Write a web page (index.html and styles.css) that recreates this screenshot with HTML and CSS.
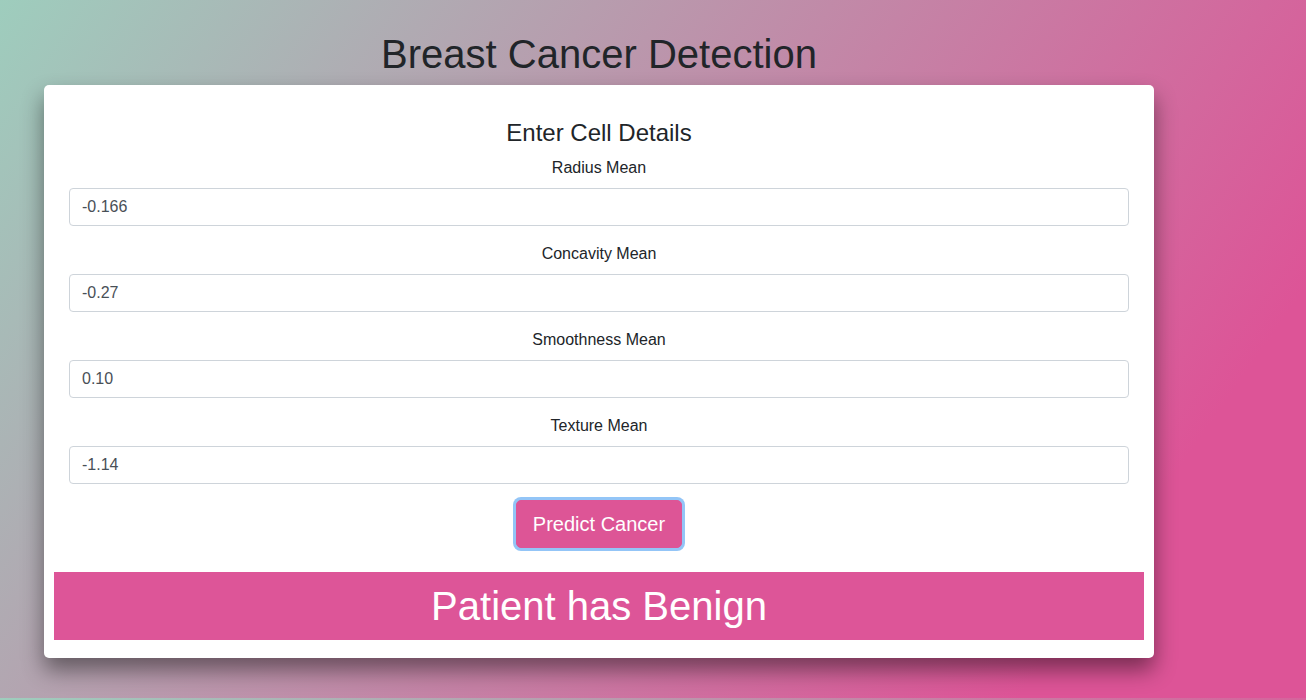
FILE: index.html
```html
<!DOCTYPE html>
<html lang="en">
<head>
<meta charset="utf-8">
<title>Breast Cancer Detection</title>
<link rel="stylesheet" href="styles.css">
</head>
<body>
<div class="wrap">
  <h1 class="title">Breast Cancer Detection</h1>
  <div class="card">
    <form class="form">
      <h4 class="form-title">Enter Cell Details</h4>
      <div class="group">
        <label class="label">Radius Mean</label>
        <input class="input" type="text" value="-0.166">
      </div>
      <div class="group">
        <label class="label">Concavity Mean</label>
        <input class="input" type="text" value="-0.27">
      </div>
      <div class="group">
        <label class="label">Smoothness Mean</label>
        <input class="input" type="text" value="0.10">
      </div>
      <div class="group">
        <label class="label">Texture Mean</label>
        <input class="input" type="text" value="-1.14">
      </div>
      <div class="actions">
        <button class="btn" type="button">Predict Cancer</button>
      </div>
    </form>
    <div class="result">Patient has Benign</div>
  </div>
</div>
</body>
</html>
```

FILE: styles.css
```css
html {
  background: linear-gradient(125deg, #9ecdbd 0%, #dd5497 84%) 0 0 / 100% 698px repeat;
}
body {
  margin: 0;
  font-family: "Liberation Sans", Arial, sans-serif;
  color: #212529;
}
.wrap {
  width: 1110px;
  margin-left: 44px;
  padding-top: 30px;
  padding-bottom: 40px;
}
.title {
  margin: 0 0 7px;
  font-size: 40px;
  line-height: 48px;
  font-weight: 400;
  text-align: center;
}
.card {
  background: #fff;
  border-radius: 5px;
  padding: 10px 10px 18px;
  box-shadow: 0 12px 22px rgba(0, 0, 0, 0.45);
}
.form {
  padding: 24px 15px 24px;
}
.form-title {
  margin: 0 0 8px;
  font-size: 24px;
  line-height: 28.8px;
  font-weight: 400;
  text-align: center;
}
.group {
  margin-bottom: 16px;
  display: flex;
  flex-direction: column;
}
.label {
  text-align: center;
  font-size: 16px;
  line-height: 24px;
  margin-bottom: 8px;
}
.input {
  box-sizing: border-box;
  height: 38px;
  width: 100%;
  padding: 6px 12px;
  font-family: inherit;
  font-size: 16px;
  line-height: 24px;
  color: #495057;
  background: #fff;
  border: 1px solid #ced4da;
  border-radius: 4px;
  outline: none;
}
.actions {
  display: flex;
  justify-content: center;
}
.btn {
  box-sizing: border-box;
  height: 48px;
  padding: 8px 16px;
  font-family: inherit;
  font-size: 20px;
  line-height: 30px;
  color: #fff;
  background: #dd5596;
  border: 1px solid #dd5596;
  border-radius: 5px;
  box-shadow: 0 0 0 3px #93c5f7;
}
.result {
  background: #dd5598;
  color: #fff;
  font-size: 40px;
  line-height: 68px;
  height: 68px;
  text-align: center;
}
```
